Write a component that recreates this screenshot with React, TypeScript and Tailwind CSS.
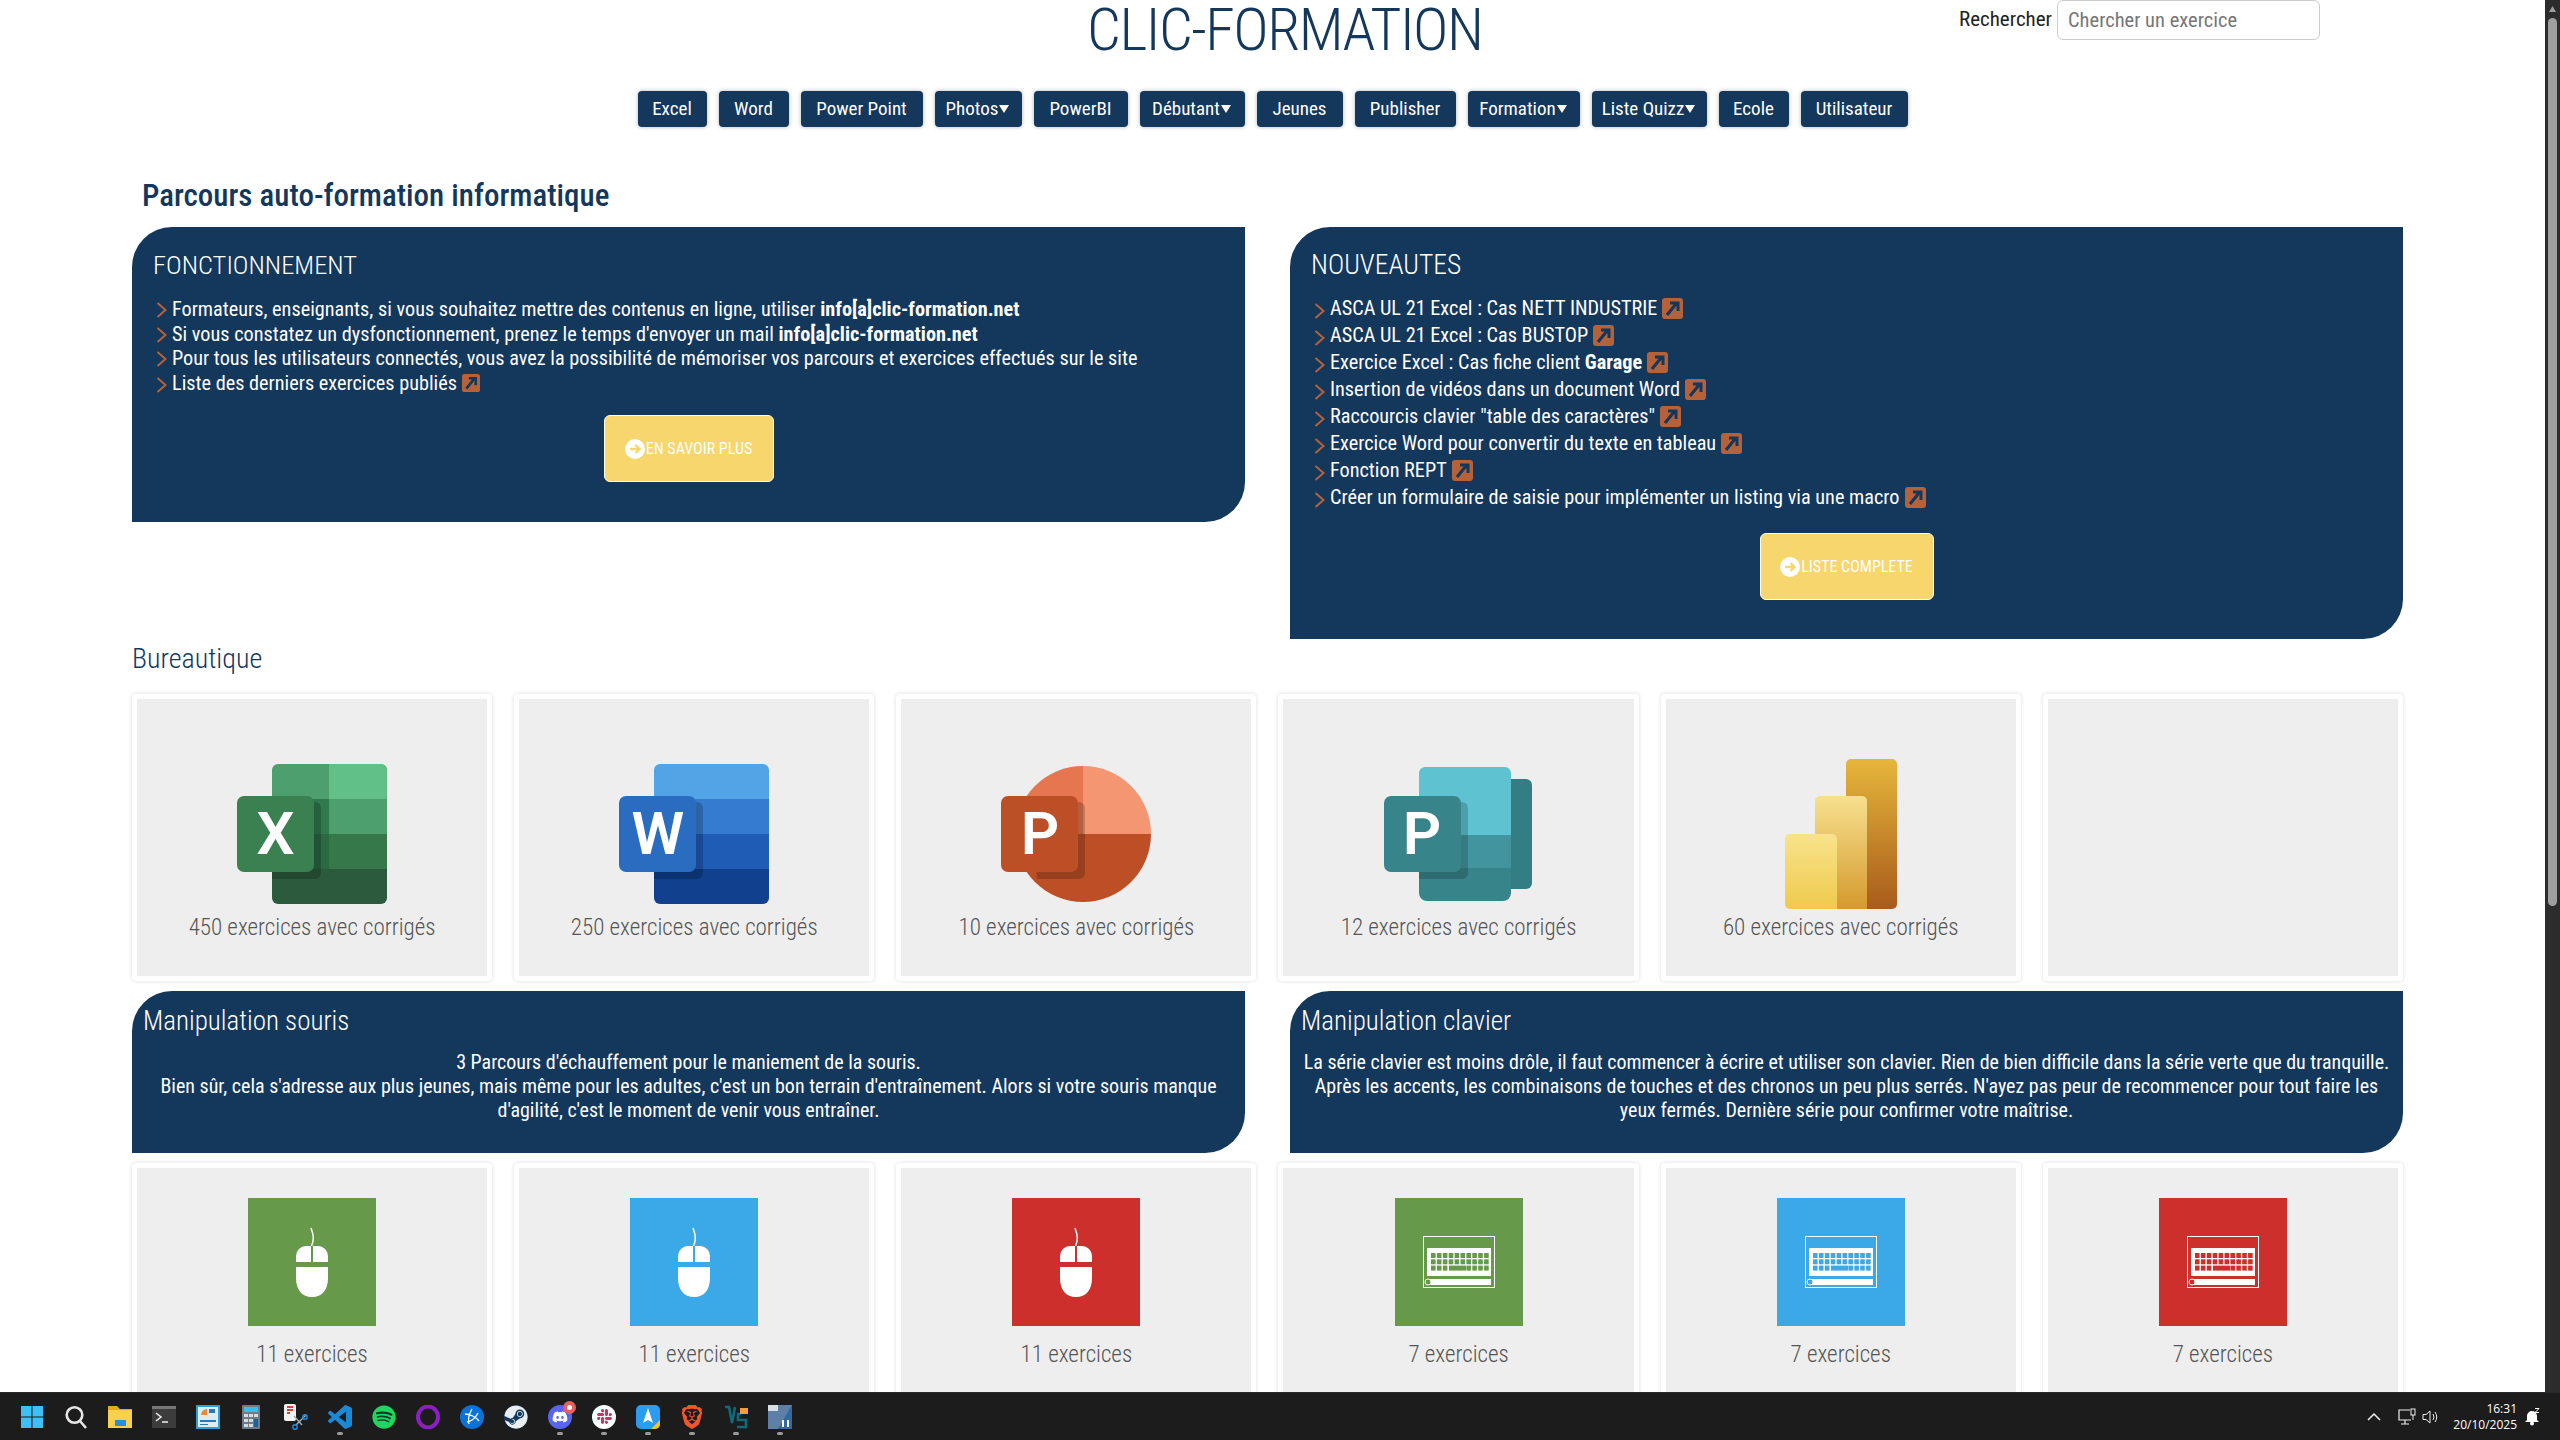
import type { ReactNode } from "react";
import { FaDiscord, FaSlack, FaSpotify, FaSteam } from "react-icons/fa";
import { SiBrave } from "react-icons/si";

const NAV = [
  { label: "Excel", w: "w-[69px]" },
  { label: "Word", w: "w-[70px]" },
  { label: "Power Point", w: "w-[122px]" },
  { label: "Photos", w: "w-[87px]", caret: true },
  { label: "PowerBI", w: "w-[94px]" },
  { label: "Débutant", w: "w-[105px]", caret: true },
  { label: "Jeunes", w: "w-[86px]" },
  { label: "Publisher", w: "w-[101px]" },
  { label: "Formation", w: "w-[112px]", caret: true },
  { label: "Liste Quizz", w: "w-[115px]", caret: true },
  { label: "Ecole", w: "w-[70px]" },
  { label: "Utilisateur", w: "w-[107px]" },
];

const NEWS: ReactNode[] = [
  "ASCA UL 21 Excel : Cas NETT INDUSTRIE",
  "ASCA UL 21 Excel : Cas BUSTOP",
  <>
    Exercice Excel : Cas fiche client <b>Garage</b>
  </>,
  "Insertion de vidéos dans un document Word",
  'Raccourcis clavier "table des caractères"',
  "Exercice Word pour convertir du texte en tableau",
  "Fonction REPT",
  "Créer un formulaire de saisie pour implémenter un listing via une macro",
];

function Chevron() {
  return (
    <svg width="11" height="16" viewBox="0 0 11 16" className="mt-[5px] mr-[5px] ml-[3px] shrink-0">
      <path d="M1.5 1 L9.5 8 L1.5 15" fill="none" stroke="#b5623a" strokeWidth="2" />
    </svg>
  );
}

function LinkBadge({ size }: { size: number }) {
  return (
    <svg width={size} height={size} viewBox="0 0 21 21" className="ml-[5px] inline-block shrink-0">
      <rect width="21" height="21" rx="3" fill="#b5623a" />
      <path d="M5 17 L14 6 M8 5 H16 V13" fill="none" stroke="#14375c" strokeWidth="3" />
    </svg>
  );
}

function YellowButton({ label, w }: { label: string; w: string }) {
  return (
    <div className={`mx-auto flex h-[67px] items-center justify-center gap-[1px] rounded-[6px] border border-white bg-[#f6d66d] text-[16px] text-white ${w}`}>
      <svg width="20" height="20" viewBox="0 0 20 20" className="shrink-0">
        <circle cx="10" cy="10" r="10" fill="#fff" />
        <path d="M5 10 H14 M10.5 6 L14.5 10 L10.5 14" fill="none" stroke="#f6d66d" strokeWidth="2.4" />
      </svg>
      {label}
    </div>
  );
}

function ExcelLike({ c, front }: { c: string[]; front: string }) {
  return (
    <svg width="150" height="140" viewBox="0 0 150 140">
      <path d="M41 0 H144 a6 6 0 0 1 6 6 V35 H35 V6 a6 6 0 0 1 6-6z" fill={c[0]} />
      <rect x="35" y="35" width="115" height="35" fill={c[1]} />
      <rect x="35" y="70" width="115" height="35" fill={c[2]} />
      <path d="M35 105 H150 V134 a6 6 0 0 1-6 6 H41 a6 6 0 0 1-6-6z" fill={c[3]} />
      {c[4] && <path d="M92 0 H144 a6 6 0 0 1 6 6 V35 H92z" fill={c[4]} />}
      {c[5] && <rect x="92" y="35" width="58" height="35" fill={c[5]} />}
      {c[6] && <rect x="92" y="70" width="58" height="35" fill={c[6]} />}
      {c[7] && <rect x="35" y="35" width="57" height="35" fill={c[7]} />}
      <path d="M35 38 H78 a6 6 0 0 1 6 6 V109 a6 6 0 0 1-6 6 H35z" fill="#000" opacity="0.2" />
      <rect x="0" y="32" width="77" height="76" rx="7" fill={front} />
    </svg>
  );
}

function OfficeLetter({ letter }: { letter: string }) {
  return (
    <span className="absolute top-[32px] left-[0px] flex h-[76px] w-[77px] items-center justify-center text-[60px] leading-none font-semibold font-stretch-[100%] text-white">
      {letter}
    </span>
  );
}

function AppIcon({ name }: { name: string }) {
  if (name === "excel")
    return (
      <div className="relative mt-[5px] h-[140px] w-[150px]">
        <ExcelLike c={["#4da06d", "#2f7a4c", "#2a6a42", "#2c5a3c", "#61c087", "#4da06d", "#37784a", "#2f7a4c"]} front="#3a8050" />
        <OfficeLetter letter="X" />
      </div>
    );
  if (name === "word")
    return (
      <div className="relative mt-[5px] h-[140px] w-[150px]">
        <ExcelLike c={["#53a4e6", "#357cd0", "#1e5cb6", "#10408e"]} front="#2a6cc0" />
        <OfficeLetter letter="W" />
      </div>
    );
  if (name === "ppt")
    return (
      <div className="relative mt-[5px] h-[140px] w-[150px]">
        <svg width="150" height="140" viewBox="0 0 150 140">
          <path d="M82 2 A68 68 0 0 0 14 70 H82z" fill="#e5764f" />
          <path d="M82 2 A68 68 0 0 1 150 70 H82z" fill="#f59673" />
          <path d="M14 70 A68 68 0 0 0 150 70z" fill="#bd4f26" />
          <path d="M30 38 H78 a6 6 0 0 1 6 6 V109 a6 6 0 0 1-6 6 H36z" fill="#000" opacity="0.2" />
          <rect x="0" y="32" width="77" height="76" rx="7" fill="#bd4f26" />
        </svg>
        <OfficeLetter letter="P" />
      </div>
    );
  if (name === "publisher")
    return (
      <div className="relative mt-[5px] h-[140px] w-[150px]">
        <svg width="150" height="140" viewBox="0 0 150 140">
          <path d="M120 15 H142 a6 6 0 0 1 6 6 V119 a6 6 0 0 1-6 6 H120z" fill="#337e85" />
          <path d="M41 3 H121 a6 6 0 0 1 6 6 V71 H35 V9 a6 6 0 0 1 6-6z" fill="#5fc2d1" />
          <rect x="35" y="71" width="92" height="33" fill="#42959f" />
          <path d="M35 104 H127 V129 a8 8 0 0 1-8 8 H43 a8 8 0 0 1-8-8z" fill="#37858b" />
          <path d="M35 38 H78 a6 6 0 0 1 6 6 V109 a6 6 0 0 1-6 6 H35z" fill="#000" opacity="0.18" />
          <rect x="0" y="32" width="77" height="76" rx="7" fill="#37858b" />
        </svg>
        <OfficeLetter letter="P" />
      </div>
    );
  return (
    <svg width="112" height="150" viewBox="0 0 112 150">
      <defs>
        <linearGradient id="bi1" x1="0" y1="0" x2="0" y2="1">
          <stop offset="0" stopColor="#e6b63b" />
          <stop offset="1" stopColor="#a85b1b" />
        </linearGradient>
        <linearGradient id="bi2" x1="0" y1="0" x2="0" y2="1">
          <stop offset="0" stopColor="#f7e08f" />
          <stop offset="1" stopColor="#d59a2d" />
        </linearGradient>
        <linearGradient id="bi3" x1="0" y1="0" x2="0" y2="1">
          <stop offset="0" stopColor="#f8e28c" />
          <stop offset="1" stopColor="#efca4c" />
        </linearGradient>
      </defs>
      <path d="M61 5 a5 5 0 0 1 5-5 H107 a5 5 0 0 1 5 5 V145 a5 5 0 0 1-5 5 H61z" fill="url(#bi1)" />
      <path d="M30 42 a5 5 0 0 1 5-5 H77 a5 5 0 0 1 5 5 V150 H30z" fill="url(#bi2)" />
      <path d="M0 80 a5 5 0 0 1 5-5 H47 a5 5 0 0 1 5 5 V150 H5 a5 5 0 0 1-5-5z" fill="url(#bi3)" />
    </svg>
  );
}

function MouseTile({ color }: { color: string }) {
  return (
    <svg width="128" height="128" viewBox="0 0 128 128">
      <rect width="128" height="128" fill={color} />
      <path d="M63 30 C66 38 66 42 63.5 48" fill="none" stroke="#fff" strokeWidth="1.5" />
      <path d="M48 64 V58 a10 10 0 0 1 10-10 H63 V64z M65 64 V48 H70 a10 10 0 0 1 10 10 V64z" fill="#fff" />
      <path d="M48 69 H80 V80 C80 92 74 99 64 99 C54 99 48 92 48 80z" fill="#fff" />
    </svg>
  );
}

function KeyboardTile({ color }: { color: string }) {
  const keys = [];
  for (let r = 0; r < 3; r++) {
    for (let k = 0; k < 10; k++) {
      if (r === 2 && k >= 3 && k <= 5) continue;
      keys.push(<rect key={`${r}-${k}`} x={36 + k * 5.9} y={55 + r * 6.3} width="4.6" height="5" fill={color} />);
    }
  }
  return (
    <svg width="128" height="128" viewBox="0 0 128 128">
      <rect width="128" height="128" fill={color} />
      <rect x="28.5" y="38.5" width="71" height="51" fill="none" stroke="#fff" />
      <rect x="32" y="50" width="64" height="28" fill="#fff" />
      {keys}
      <rect x="54" y="67.6" width="17" height="5" fill={color} />
      <rect x="34" y="81" width="62" height="6" fill="#fff" />
      <circle cx="33" cy="84" r="3" fill={color} stroke="#fff" />
    </svg>
  );
}

function Card({ children, caption, tall }: { children?: ReactNode; caption?: string; tall?: boolean }) {
  return (
    <div className={`rounded-[4px] bg-white p-[5px] shadow-[0_0_4px_rgba(0,0,0,0.14)] ${tall ? "h-[240px]" : "h-[287px]"}`}>
      <div className={`flex h-full flex-col items-center bg-[#eeeeee] text-[23px] font-light text-[#555555] ${tall ? "pt-[30px]" : "pt-[60px]"}`}>
        {tall ? children : <div className="h-[150px]">{children}</div>}
        {caption && <div className={`leading-[32px] ${tall ? "mt-[13px]" : "mt-[3px]"}`}>{caption}</div>}
      </div>
    </div>
  );
}

function Panel({ title, lines }: { title: string; lines: ReactNode }) {
  return (
    <section className="h-[162px] rounded-tl-[40px] rounded-br-[40px] bg-[#14375c] text-white">
      <h3 className="pt-[14px] pl-[11px] text-[27px] leading-[32px] font-light">{title}</h3>
      <p className="mt-[13px] text-center text-[20px] leading-[24px]">{lines}</p>
    </section>
  );
}

function Dot() {
  return <span className="absolute bottom-[5px] left-[19px] h-[3px] w-[6px] rounded-full bg-[#9a9a9a]" />;
}

const TASK_ICONS: { node: ReactNode; running?: boolean }[] = [
  {
    node: (
      <svg width="24" height="24" viewBox="0 0 24 24">
        <path d="M1 1 H11.5 V11.5 H1z M12.5 1 H23 V11.5 H12.5z M1 12.5 H11.5 V23 H1z M12.5 12.5 H23 V23 H12.5z" fill="#3cc0f5" />
      </svg>
    ),
  },
  {
    node: (
      <svg width="24" height="24" viewBox="0 0 24 24">
        <circle cx="10.5" cy="10" r="7.8" fill="none" stroke="#e6e6e6" strokeWidth="2.6" />
        <path d="M16 16 L22 23" stroke="#e6e6e6" strokeWidth="2.6" />
      </svg>
    ),
  },
  {
    node: (
      <svg width="24" height="24" viewBox="0 0 24 24">
        <path d="M0 1 H9 L12 4 H24 V22 H0z" fill="#e3a921" />
        <path d="M0 5 H24 V23 H0z" fill="#fbd04e" />
        <rect x="7" y="15" width="11" height="6" fill="#2a8fd8" />
      </svg>
    ),
  },
  {
    node: (
      <svg width="24" height="24" viewBox="0 0 24 24">
        <rect y="1" width="24" height="22" fill="#3c3c3c" />
        <rect y="1" width="24" height="3" fill="#777" />
        <path d="M4 8 L9 12 L4 16 M10 17 H16" fill="none" stroke="#eee" strokeWidth="1.6" />
      </svg>
    ),
  },
  {
    node: (
      <svg width="24" height="24" viewBox="0 0 24 24">
        <rect width="24" height="24" y="0" fill="#2d9fd8" />
        <rect x="2" y="2" width="20" height="20" fill="#d9eef8" />
        <path d="M5 10 a6 6 0 0 1 6-6 V10z" fill="#e8883a" />
        <path d="M13 4 H19 V8 H13z M4 15 H20 V17 H4z M4 19 H12 V20 H4z" fill="#2d77b8" />
      </svg>
    ),
  },
  {
    node: (
      <svg width="24" height="24" viewBox="0 0 24 24">
        <rect x="2" width="18" height="24" rx="1" fill="#6e7c88" />
        <rect x="4" y="2" width="14" height="5" fill="#38bdf0" />
        <path d="M4 9 H8 V12 H4z M9 9 H13 V12 H9z M14 9 H18 V12 H14z M4 14 H8 V17 H4z M9 14 H13 V17 H9z M4 19 H8 V22 H4z M9 19 H13 V22 H9z" fill="#d6dbe0" />
        <rect x="14" y="14" width="4" height="8" fill="#1f5f9c" />
      </svg>
    ),
  },
  {
    node: (
      <svg width="24" height="26" viewBox="0 0 24 26">
        <rect x="0" y="0" width="12" height="17" rx="2" fill="#f2f2f2" />
        <path d="M3 3 H9 M3 6 H9 M3 9 H6" stroke="#d9472f" strokeWidth="2" />
        <path d="M10 12 L18 21 M22 11 L12 21" stroke="#9fb0bd" strokeWidth="1.4" />
        <circle cx="11" cy="23" r="2.2" fill="none" stroke="#1d8fe0" strokeWidth="1.4" />
        <circle cx="21" cy="13" r="2.2" fill="none" stroke="#1d8fe0" strokeWidth="1.4" />
      </svg>
    ),
  },
  {
    node: (
      <svg width="24" height="24" viewBox="0 0 24 24">
        <path
          d="M23.15 2.587L18.21.21a1.494 1.494 0 0 0-1.705.29l-9.46 8.63-4.12-3.128a.999.999 0 0 0-1.276.057L.327 7.261A1 1 0 0 0 .326 8.74L3.899 12 .326 15.26a1 1 0 0 0 .001 1.479L1.65 17.94a.999.999 0 0 0 1.276.057l4.12-3.128 9.46 8.63a1.492 1.492 0 0 0 1.704.29l4.942-2.377A1.5 1.5 0 0 0 24 20.06V3.939a1.5 1.5 0 0 0-.85-1.352zm-5.146 14.861L10.826 12l7.178-5.448v10.896z"
          fill="#1a8ad6"
        />
      </svg>
    ),
    running: true,
  },
  { node: <FaSpotify size={24} color="#1ed760" className="rounded-full bg-[#143a20]" /> },
  {
    node: (
      <svg width="24" height="24" viewBox="0 0 24 24">
        <ellipse cx="12" cy="12" rx="10" ry="10.5" fill="none" stroke="#8a1fc4" strokeWidth="4" />
      </svg>
    ),
  },
  {
    node: (
      <svg width="24" height="24" viewBox="0 0 24 24">
        <circle cx="12" cy="12" r="12" fill="#0a72d8" />
        <path d="M12 4 C9 9 8 15 9 19 M5 9 C10 9 16 12 19 16 M18 8 C16 12 12 16 7 17" fill="none" stroke="#fff" strokeWidth="1.3" />
      </svg>
    ),
  },
  { node: <FaSteam size={24} color="#e8eef2" className="rounded-full bg-[#123a5c]" /> },
  {
    node: (
      <span className="relative flex h-6 w-6 items-center justify-center rounded-full bg-[#5865f2]">
        <FaDiscord size={16} color="#fff" />
        <span className="absolute -top-[4px] -right-[4px] flex h-[13px] w-[13px] items-center justify-center rounded-full bg-[#e8605c]">
          <span className="h-[5px] w-[5px] rounded-full bg-white" />
        </span>
      </span>
    ),
    running: true,
  },
  {
    node: (
      <span className="flex h-6 w-6 items-center justify-center rounded-full bg-white">
        <FaSlack size={17} color="#c23a6a" />
      </span>
    ),
    running: true,
  },
  {
    node: (
      <svg width="24" height="24" viewBox="0 0 24 24">
        <rect width="24" height="24" rx="5" fill="#2a9df0" />
        <path d="M12 3 L17 18 L12 15 L7 18z" fill="#fff" />
        <path d="M24 15 V19 a5 5 0 0 1-5 5 H15z" fill="#f5c518" />
      </svg>
    ),
    running: true,
  },
  { node: <SiBrave size={24} color="#f1562b" />, running: true },
  {
    node: (
      <svg width="24" height="24" viewBox="0 0 24 24">
        <path d="M1 2 H5 L8 18 L11 2 M13 22 H22 V15 H14 V9 H17" fill="none" stroke="#0f6a7a" strokeWidth="2.6" />
        <rect x="16" y="3" width="8" height="6" fill="#e8a33a" />
      </svg>
    ),
    running: true,
  },
  {
    node: (
      <svg width="24" height="24" viewBox="0 0 24 24">
        <rect width="24" height="24" fill="#5d7fa8" />
        <path d="M0 0 H10 V6 H0z" fill="#d8dee6" />
        <path d="M24 0 L10 24 H24z" fill="#35689c" />
        <path d="M14 15 H16 V22 H14z M19 15 H21 V22 H19z" fill="#fff" />
      </svg>
    ),
    running: true,
  },
];

function Taskbar() {
  return (
    <footer className="flex h-[48px] shrink-0 items-center justify-between border-t border-[#2a2a2a] bg-[#1c1c1c] pl-[10px] font-['Open_Sans',sans-serif] font-stretch-[100%] text-white">
      <div className="flex">
        {TASK_ICONS.map((icon, i) => (
          <div key={i} className="relative flex h-[47px] w-[44px] items-center justify-center">
            {icon.node}
            {icon.running && <Dot />}
          </div>
        ))}
      </div>
      <div className="flex items-center">
        <svg width="14" height="8" viewBox="0 0 14 8" className="mr-[17px]">
          <path d="M1 7 L7 1 L13 7" fill="none" stroke="#eee" strokeWidth="1.5" />
        </svg>
        <svg width="18" height="18" viewBox="0 0 18 18" className="mr-[6px]">
          <path d="M12 2 H1 V12 H13 M7 12 V16 M3 16 H11" fill="none" stroke="#eee" strokeWidth="1.2" />
          <rect x="13" y="1" width="4" height="6" fill="none" stroke="#eee" />
          <path d="M15 7 V12" stroke="#eee" />
        </svg>
        <svg width="18" height="16" viewBox="0 0 18 16" className="mr-[13px]">
          <path d="M1 5.5 H4 L8 2 V14 L4 10.5 H1z M11 5 Q13 8 11 11 M13 3 Q16.500 8 13 13" fill="none" stroke="#eee" />
        </svg>
        <div className="text-right text-[12px] leading-[16px]">
          <div>16:31</div>
          <div>20/10/2025</div>
        </div>
        <svg width="16" height="18" viewBox="0 0 16 18" className="mr-[20px] ml-[7px]">
          <path d="M8 3 a5 5 0 0 1 5 5 V12 L15 14 H1 L3 12 V8 a5 5 0 0 1 5-5z" fill="#fff" />
          <circle cx="8" cy="15.500" r="2" fill="#fff" />
          <path d="M11 0.500 H15 L11 4.500 H15" fill="none" stroke="#fff" />
        </svg>
      </div>
    </footer>
  );
}

function Scrollbar() {
  return (
    <div className="flex w-[15px] shrink-0 flex-col items-center bg-[#2c2c2c]">
      <svg width="9" height="18" viewBox="0 0 9 18" className="shrink-0">
        <path d="M4.500 6 L8 12 H1z" fill="#9f9f9f" />
      </svg>
      <div className="h-[888px] w-[9px] rounded-full bg-[#9f9f9f]" />
    </div>
  );
}

export default function App() {
  return (
    <div className="flex h-screen w-full flex-col overflow-hidden bg-white font-['Roboto',sans-serif] font-stretch-[75%]">
      <div className="flex min-h-0 flex-1">
        <main className="min-w-0 flex-1 overflow-hidden">
          <header className="flex h-[91px] items-start">
            <h1 className="ml-[1087px] text-[60px] leading-[60px] font-light tracking-[-1.5px] text-[#14375c]">CLIC-FORMATION</h1>
            <div className="mr-[225px] ml-auto flex h-[40px] items-center gap-[5px]">
              <span className="text-[21px] text-[#222222]">Rechercher</span>
              <input
                readOnly
                placeholder="Chercher un exercice"
                className="h-[40px] w-[263px] rounded-[6px] border border-[#cccccc] px-[10px] text-[20.5px] placeholder:text-[#777777]"
              />
            </div>
          </header>

          <nav className="flex justify-center gap-[12px]">
            {NAV.map((item) => (
              <div
                key={item.label}
                className={`flex h-[36px] items-center justify-center rounded-[4px] bg-[#14375c] text-[19px] text-white shadow-[0_0_4px_rgba(0,0,0,0.3)] ${item.w}`}
              >
                {item.label}
                {item.caret && (
                  <svg width="12" height="8" viewBox="0 0 12 8">
                    <path d="M1 0 H11 L6 8z" fill="#fff" />
                  </svg>
                )}
              </div>
            ))}
          </nav>

          <div className="pr-[142px] pl-[132px]">
            <h2 className="h-[100px] pt-[49px] pl-[10px] text-[31px] leading-[40px] font-medium text-[#14375c]">
              Parcours auto-formation informatique
            </h2>

            <div className="grid grid-cols-2 items-start gap-x-[45px]">
              <section className="h-[295px] rounded-tl-[40px] rounded-br-[40px] bg-[#14375c] px-[21px] pt-[21px] text-white">
                <h3 className="text-[26.5px] leading-[34px] font-light">FONCTIONNEMENT</h3>
                <ul className="mt-[15px] text-[20.25px] leading-[24.5px]">
                  <li className="flex">
                    <Chevron />
                    <span>
                      Formateurs, enseignants, si vous souhaitez mettre des contenus en ligne, utiliser <b>info[a]clic-formation.net</b>
                    </span>
                  </li>
                  <li className="flex">
                    <Chevron />
                    <span>
                      Si vous constatez un dysfonctionnement, prenez le temps d'envoyer un mail <b>info[a]clic-formation.net</b>
                    </span>
                  </li>
                  <li className="flex">
                    <Chevron />
                    <span>Pour tous les utilisateurs connectés, vous avez la possibilité de mémoriser vos parcours et exercices effectués sur le site</span>
                  </li>
                  <li className="flex items-center">
                    <Chevron />
                    <span>Liste des derniers exercices publiés</span>
                    <LinkBadge size={18} />
                  </li>
                </ul>
                <div className="mt-[20px]">
                  <YellowButton label="EN SAVOIR PLUS" w="w-[170px]" />
                </div>
              </section>

              <section className="h-[412px] rounded-tl-[40px] rounded-br-[40px] bg-[#14375c] px-[21px] pt-[21px] text-white">
                <h3 className="text-[27.5px] leading-[34px] font-light">NOUVEAUTES</h3>
                <ul className="mt-[13px] text-[20.25px] leading-[27px]">
                  {NEWS.map((line, i) => (
                    <li key={i} className="flex items-center">
                      <Chevron />
                      <span>{line}</span>
                      <LinkBadge size={21} />
                    </li>
                  ))}
                </ul>
                <div className="mt-[22px]">
                  <YellowButton label="LISTE COMPLETE" w="w-[174px]" />
                </div>
              </section>
            </div>

            <h2 className="h-[55px] text-[28px] leading-[40px] font-light text-[#14375c]">Bureautique</h2>

            <div className="grid grid-cols-6 gap-x-[22px]">
              <Card caption="450 exercices avec corrigés">
                <AppIcon name="excel" />
              </Card>
              <Card caption="250 exercices avec corrigés">
                <AppIcon name="word" />
              </Card>
              <Card caption="10 exercices avec corrigés">
                <AppIcon name="ppt" />
              </Card>
              <Card caption="12 exercices avec corrigés">
                <AppIcon name="publisher" />
              </Card>
              <Card caption="60 exercices avec corrigés">
                <AppIcon name="bi" />
              </Card>
              <Card />
            </div>

            <div className="mt-[10px] grid grid-cols-2 gap-x-[45px]">
              <Panel
                title="Manipulation souris"
                lines={
                  <>
                    3 Parcours d'échauffement pour le maniement de la souris.
                    <br />
                    Bien sûr, cela s'adresse aux plus jeunes, mais même pour les adultes, c'est un bon terrain d'entraînement. Alors si votre souris manque
                    <br />
                    d'agilité, c'est le moment de venir vous entraîner.
                  </>
                }
              />
              <Panel
                title="Manipulation clavier"
                lines={
                  <>
                    La série clavier est moins drôle, il faut commencer à écrire et utiliser son clavier. Rien de bien difficile dans la série verte que du tranquille.
                    <br />
                    Après les accents, les combinaisons de touches et des chronos un peu plus serrés. N'ayez pas peur de recommencer pour tout faire les
                    <br />
                    yeux fermés. Dernière série pour confirmer votre maîtrise.
                  </>
                }
              />
            </div>

            <div className="mt-[10px] grid grid-cols-6 gap-x-[22px]">
              <Card tall caption="11 exercices">
                <MouseTile color="#669a4a" />
              </Card>
              <Card tall caption="11 exercices">
                <MouseTile color="#3ba8e8" />
              </Card>
              <Card tall caption="11 exercices">
                <MouseTile color="#cd302c" />
              </Card>
              <Card tall caption="7 exercices">
                <KeyboardTile color="#669a4a" />
              </Card>
              <Card tall caption="7 exercices">
                <KeyboardTile color="#3ba8e8" />
              </Card>
              <Card tall caption="7 exercices">
                <KeyboardTile color="#cd302c" />
              </Card>
            </div>
          </div>
        </main>
        <Scrollbar />
      </div>
      <Taskbar />
    </div>
  );
}
